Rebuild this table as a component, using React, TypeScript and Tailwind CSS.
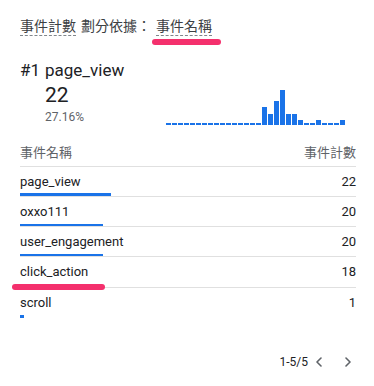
import React from "react";

const rows = [
  { name: "page_view", count: 22 },
  { name: "oxxo111", count: 20 },
  { name: "user_engagement", count: 20 },
  { name: "click_action", count: 18, marked: true },
  { name: "scroll", count: 1 },
];

// 30 time slots, 0 = empty (drawn as a dash)
const trend = [
  0, 0, 0, 0, 0, 0, 0, 0, 0, 0, 0, 0, 0, 0, 0, 0, 18, 11, 24, 35, 11, 11, 5, 0,
  0, 5, 0, 0, 0, 5,
];

const maxCount = 22;

function Chevron({ dir }: { dir: "left" | "right" }) {
  return (
    <svg width="8" height="10" viewBox="0 0 8 10" fill="none">
      <path
        d={dir === "left" ? "M6 1 L2 5 L6 9" : "M2 1 L6 5 L2 9"}
        stroke="#5f6368"
        strokeWidth="1.6"
        strokeLinecap="round"
        strokeLinejoin="round"
      />
    </svg>
  );
}

export default function App() {
  return (
    <div className="w-[374px] h-[386px] bg-white pl-5 pr-[18px] pt-[18px] font-[Roboto,'Noto_Sans_CJK_TC',sans-serif]">
      <div className="flex items-start text-[14px] leading-[17px] text-[#3c4043]">
        <span className="border-b border-dashed border-[#80868b]">事件計數</span>
        <span className="ml-[5px]">劃分依據：</span>
        <span className="relative ml-[5px]">
          <span className="block border-b border-dashed border-[#80868b]">事件名稱</span>
          <span className="absolute left-[-4px] top-[21px] w-[69px] h-[6px] rounded-full bg-[#f4306d]" />
        </span>
      </div>

      <div className="mt-[24px] flex text-[17px] leading-[20px] text-[#202124]">
        <span className="w-[25px]">#1</span>
        <span>page_view</span>
      </div>
      <div className="flex items-end">
        <div className="w-[146px] pl-[25px]">
          <div className="mt-[3px] text-[21px] leading-[24px] text-[#202124]">22</div>
          <div className="mt-[1.5px] text-[12px] leading-[16px] text-[#5f6368]">27.16%</div>
        </div>
        <div className="flex items-end gap-[1px]">
          {trend.map((h, i) => (
            <div
              key={i}
              className="w-[5px] bg-[#1a73e8]"
              style={{ height: h === 0 ? 2 : h }}
            />
          ))}
        </div>
      </div>

      <div className="mt-[20px] flex justify-between border-b border-[#e0e0e0] pb-[5px] text-[13px] leading-[16px] text-[#5f6368]">
        <span>事件名稱</span>
        <span>事件計數</span>
      </div>

      {rows.map((r, i) => (
        <div
          key={r.name}
          className={
            "relative flex flex-col h-[30.3px] pt-[7px] " +
            (i < rows.length - 1 ? "border-b border-[#e0e0e0]" : "")
          }
        >
          <div className="flex justify-between text-[13px] leading-[16px] text-[#202124]">
            <span>{r.name}</span>
            <span>{r.count}</span>
          </div>
          <div
            className="mt-auto h-[2.5px] bg-[#1a73e8]"
            style={{ width: (91 * r.count) / maxCount }}
          />
          {r.marked && (
            <span className="absolute left-[-8px] top-[26.5px] w-[93px] h-[6px] rounded-full bg-[#f4306d]" />
          )}
        </div>
      ))}

      <div className="mt-[36px] flex items-center justify-end pr-[4px] text-[12px] leading-[16px] text-[#202124]">
        <span>1-5/5</span>
        <span className="ml-[7px] flex">
          <Chevron dir="left" />
        </span>
        <span className="ml-[21px] flex">
          <Chevron dir="right" />
        </span>
      </div>
    </div>
  );
}
